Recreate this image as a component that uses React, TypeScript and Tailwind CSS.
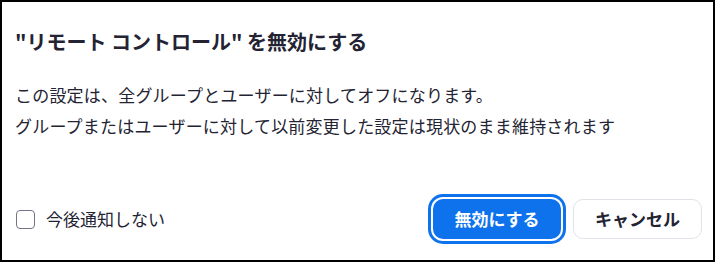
export default function App() {
  return (
    <div
      className="box-border flex h-[262px] w-[715px] flex-col border-2 border-black bg-white pl-[13px] pr-[11px] text-[#232333]"
      style={{ fontFamily: '"Noto Sans CJK JP", "Noto Sans", sans-serif' }}
    >
      <h1 className="mt-[26px] text-[20px] font-bold leading-[28px]">
        "リモート コントロール" を無効にする
      </h1>

      <div className="mt-[24px] text-[17px] leading-[30.5px] tracking-[0.2px]">
        <p>この設定は、全グループとユーザーに対してオフになります。</p>
        <p>グループまたはユーザーに対して以前変更した設定は現状のまま維持されます</p>
      </div>

      <div className="mt-auto mb-[21px] flex items-center justify-between">
        <label className="flex items-center gap-[11px] pl-px text-[17px]">
          <span className="box-border h-[19px] w-[19px] rounded-[4px] border-[1.5px] border-[#747487] bg-white" />
          今後通知しない
        </label>

        <div className="flex items-center gap-3">
          <button className="h-[40px] w-[128px] rounded-[10px] bg-[#0e72ed] text-[17px] font-bold text-white ring-[3px] ring-[#0e72ed] ring-offset-2 ring-offset-white">
            無効にする
          </button>
          <button className="box-border h-[40px] w-[129px] rounded-[10px] border border-[#dfe3e8] bg-white text-[17px] font-semibold text-[#232333]">
            キャンセル
          </button>
        </div>
      </div>
    </div>
  );
}
